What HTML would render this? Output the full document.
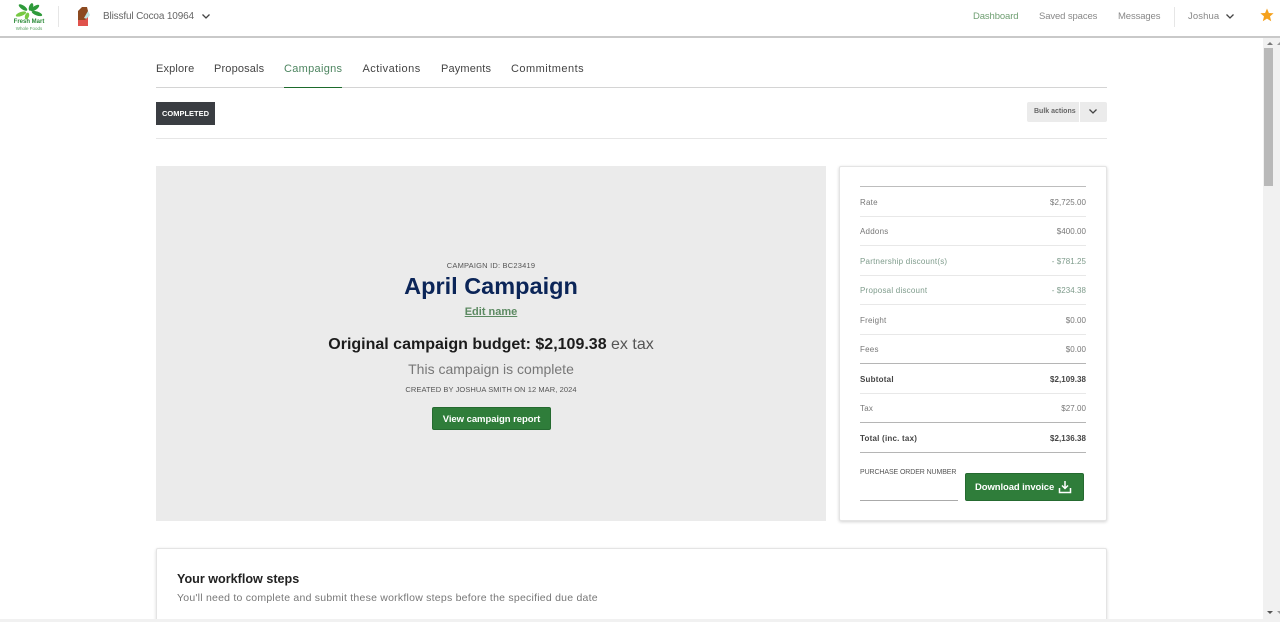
<!DOCTYPE html>
<html lang="en"><head><meta charset="utf-8"><title>April Campaign</title>
<style>
html,body{margin:0;padding:0;width:1280px;height:622px;overflow:hidden;background:#fff;font-family:"Liberation Sans",sans-serif;color:#555}
#p{position:relative;width:1280px;height:622px;overflow:hidden;background:#fff}
.a{position:absolute;white-space:nowrap}
.l{position:absolute;height:1px}
.c{left:156px;width:670px;text-align:center}
.rl{left:860px;font-size:8px;letter-spacing:.22px;color:#777;line-height:10px}
.rr{left:986px;width:100px;text-align:right;font-size:8px;letter-spacing:.05px;color:#777;line-height:10px}
.nav{top:62px;font-size:11px;line-height:14px;color:#444}
.top{top:11px;font-size:9.5px;line-height:12px;letter-spacing:-.12px;color:#888}
.btn{position:absolute;background:#2f7d3a;border:1px solid #256a30;border-radius:2px;box-sizing:border-box;color:#fff;font-weight:bold;font-size:9.5px;white-space:nowrap}
</style></head><body><div id="p">
<div class="l" style="left:0;top:36px;width:1280px;height:2px;background:#c9c9c9"></div>
<svg class="a" style="left:14px;top:3px" width="30" height="18" viewBox="0 0 30 18"><ellipse cx="9" cy="4.500" rx="5" ry="2" transform="rotate(35 9 4.500)" fill="#2e9a3a"/><ellipse cx="21" cy="5" rx="5" ry="2" transform="rotate(-35 21 5)" fill="#2e9a3a"/><ellipse cx="7" cy="11" rx="5.500" ry="2" transform="rotate(-20 7 11)" fill="#77c943"/><ellipse cx="23" cy="10.500" rx="5.500" ry="2" transform="rotate(20 23 10.500)" fill="#2e9a3a"/><ellipse cx="13" cy="13" rx="2" ry="3.500" transform="rotate(20 13 13)" fill="#77c943"/><ellipse cx="17" cy="4" rx="2" ry="4" transform="rotate(20 17 4)" fill="#2e9a3a"/></svg>
<div class="a" style="left:0;width:58px;text-align:center;top:19px;font-size:6px;line-height:7px;font-weight:bold;color:#2b8a38">Fresh Mart</div>
<div class="a" style="left:0;width:58px;text-align:center;top:26px;font-size:4.500px;line-height:5px;color:#58a060">Whole Foods</div>
<div class="l" style="left:58px;top:6px;width:1px;height:21px;background:#e6e6e6"></div>
<svg class="a" style="left:76px;top:6px" width="15" height="21" viewBox="0 0 15 21"><path d="M2 5 L6 1 L11 1 L12 5 V15 H2Z" fill="#8c4a20"/><path d="M8 12 L12 5 L14 9 L11 13Z" fill="#bfe5e3"/><path d="M2 14 H9 L12 11 V20 H2Z" fill="#e0524c"/></svg>
<div class="a" style="left:103px;top:11px;font-size:10px;line-height:12px;letter-spacing:-.15px;color:#666">Blissful Cocoa 10964</div>
<svg class="a" style="left:201px;top:13px" width="10" height="7" viewBox="0 0 10 7"><path d="M1.500 1.500 L5 5 L8.500 1.500" fill="none" stroke="#444" stroke-width="1.300"/></svg>
<div class="a top" style="left:973px;color:#6f9f72">Dashboard</div>
<div class="a top" style="left:1039px">Saved spaces</div>
<div class="a top" style="left:1118px">Messages</div>
<div class="l" style="left:1174px;top:7px;width:1px;height:20px;background:#e6e6e6"></div>
<div class="a top" style="left:1188px;letter-spacing:.1px">Joshua</div>
<svg class="a" style="left:1225px;top:13px" width="10" height="7" viewBox="0 0 10 7"><path d="M1.500 1.500 L5 5 L8.500 1.500" fill="none" stroke="#444" stroke-width="1.300"/></svg>
<svg class="a" style="left:1260px;top:8px" width="14" height="14" viewBox="0 0 14 14"><path d="M7 .5 L8.900 5 L13.600 5.300 L10 8.400 L11.200 13.200 L7 10.600 L2.800 13.200 L4 8.400 L.4 5.300 L5.100 5Z" fill="#f5a11c"/></svg>

<div class="a nav" style="left:156px;letter-spacing:.15px">Explore</div>
<div class="a nav" style="left:214px;letter-spacing:.15px">Proposals</div>
<div class="a nav" style="left:284px;letter-spacing:.3px;color:#4d8560">Campaigns</div>
<div class="a nav" style="left:362.500px;letter-spacing:.45px">Activations</div>
<div class="a nav" style="left:441px;letter-spacing:.15px">Payments</div>
<div class="a nav" style="left:511px;letter-spacing:.48px">Commitments</div>
<div class="l" style="left:156px;top:87px;width:951px;background:#d4d4d4"></div>
<div class="l" style="left:284px;top:87px;width:58px;background:#1d6b2c"></div>

<div class="a" style="left:156px;top:102px;width:59px;height:23px;background:#3a3d42;color:#fff;font-size:7.500px;font-weight:bold;line-height:23px;text-align:center">COMPLETED</div>
<div class="a" style="left:1027px;top:102px;width:80px;height:20px;background:#ebebeb;border-radius:2px"></div>
<div class="l" style="left:1079px;top:102px;width:1px;height:20px;background:#fff"></div>
<div class="a" style="left:1034px;top:107px;font-size:7px;line-height:10px;font-weight:bold;color:#666">Bulk actions</div>
<svg class="a" style="left:1088px;top:108px" width="10" height="7" viewBox="0 0 10 7"><path d="M1.500 1.500 L5 5 L8.500 1.500" fill="none" stroke="#444" stroke-width="1.300"/></svg>
<div class="l" style="left:156px;top:138px;width:951px;background:#e6e6e6"></div>

<div class="a" style="left:156px;top:166px;width:670px;height:355px;background:#ebebeb"></div>
<div class="a c" style="top:261px;font-size:7.500px;line-height:10px;letter-spacing:.2px;color:#555">CAMPAIGN ID: BC23419</div>
<div class="a c" style="top:272px;font-size:23.500px;line-height:28px;font-weight:bold;color:#0b2558">April Campaign</div>
<div class="a c" style="top:305px;font-size:11px;line-height:14px;font-weight:bold;color:#5c8a62;text-decoration:underline">Edit name</div>
<div class="a c" style="top:336px;font-size:16px;line-height:18px;font-weight:bold;color:#1c1c1c">Original campaign budget: $2,109.38 <span style="font-weight:normal;color:#555">ex tax</span></div>
<div class="a c" style="top:361px;font-size:14px;line-height:17px;color:#777">This campaign is complete</div>
<div class="a c" style="top:385px;font-size:7.500px;line-height:10px;letter-spacing:.08px;color:#555">CREATED BY JOSHUA SMITH ON 12 MAR, 2024</div>
<div class="btn" style="left:432px;top:407px;width:119px;height:23px;line-height:23px;text-align:center;letter-spacing:-.05px">View campaign report</div>

<div class="a" style="left:839px;top:166px;width:268px;height:355px;box-sizing:border-box;background:#fff;border:1px solid #e4e4e4;border-radius:2px;box-shadow:0 1px 3px rgba(0,0,0,.18)"></div>
<div class="l" style="left:860px;top:186px;width:226px;background:#bdbdbd"></div>
<div class="a rl" style="top:198px">Rate</div><div class="a rr" style="top:198px">$2,725.00</div>
<div class="l" style="left:860px;top:216px;width:226px;background:#e8e8e8"></div>
<div class="a rl" style="top:227px">Addons</div><div class="a rr" style="top:227px">$400.00</div>
<div class="l" style="left:860px;top:245px;width:226px;background:#e8e8e8"></div>
<div class="a rl" style="top:257px;color:#7f9c8c">Partnership discount(s)</div><div class="a rr" style="top:257px;color:#7f9c8c">- $781.25</div>
<div class="l" style="left:860px;top:275px;width:226px;background:#e8e8e8"></div>
<div class="a rl" style="top:286px;color:#7f9c8c">Proposal discount</div><div class="a rr" style="top:286px;color:#7f9c8c">- $234.38</div>
<div class="l" style="left:860px;top:304px;width:226px;background:#e8e8e8"></div>
<div class="a rl" style="top:316px">Freight</div><div class="a rr" style="top:316px">$0.00</div>
<div class="l" style="left:860px;top:334px;width:226px;background:#e8e8e8"></div>
<div class="a rl" style="top:345px">Fees</div><div class="a rr" style="top:345px">$0.00</div>
<div class="l" style="left:860px;top:363px;width:226px;background:#b5b5b5"></div>
<div class="a rl" style="top:375px;font-weight:bold;color:#444">Subtotal</div><div class="a rr" style="top:375px;font-weight:bold;color:#444">$2,109.38</div>
<div class="l" style="left:860px;top:393px;width:226px;background:#e8e8e8"></div>
<div class="a rl" style="top:404px">Tax</div><div class="a rr" style="top:404px">$27.00</div>
<div class="l" style="left:860px;top:422px;width:226px;background:#b5b5b5"></div>
<div class="a rl" style="top:434px;font-weight:bold;color:#444">Total (inc. tax)</div><div class="a rr" style="top:434px;font-weight:bold;color:#444">$2,136.38</div>
<div class="l" style="left:860px;top:452px;width:226px;background:#b5b5b5"></div>
<div class="a" style="left:860px;top:468px;font-size:7px;line-height:9px;letter-spacing:-.1px;color:#555">PURCHASE ORDER NUMBER</div>
<div class="l" style="left:860px;top:500px;width:98px;background:#aaa"></div>
<div class="btn" style="left:965px;top:473px;width:119px;height:28px;line-height:27px;padding-left:9px;letter-spacing:-.1px">Download invoice</div>
<svg class="a" style="left:1058px;top:480px" width="14" height="14" viewBox="0 0 14 14"><path d="M7 1V8M4 5.500L7 8.500L10 5.500M1.500 8V12.500H12.500V8" fill="none" stroke="#fff" stroke-width="1.500"/></svg>

<div class="a" style="left:156px;top:548px;width:951px;height:90px;box-sizing:border-box;background:#fff;border:1px solid #e4e4e4;border-radius:2px;box-shadow:0 1px 3px rgba(0,0,0,.15)"></div>
<div class="a" style="left:177px;top:572px;font-size:12.600px;line-height:15px;font-weight:bold;color:#222">Your workflow steps</div>
<div class="a" style="left:177px;top:592px;font-size:10.500px;line-height:13px;letter-spacing:.235px;color:#777">You'll need to complete and submit these workflow steps before the specified due date</div>

<div class="a" style="left:1263px;top:38px;width:17px;height:584px;background:#f1f1f1"></div>
<div class="a" style="left:1264px;top:48px;width:9px;height:138px;background:#b9b9b9"></div>
<div class="a" style="left:1266.500px;top:42px;width:0;height:0;border:3px solid transparent;border-top:0;border-bottom:3px solid #777"></div>
<div class="a" style="left:1276.500px;top:42px;width:0;height:0;border:3px solid transparent;border-top:0;border-bottom:3px solid #999"></div>
<div class="a" style="left:1266.500px;top:611px;width:0;height:0;border:3px solid transparent;border-bottom:0;border-top:3px solid #555"></div>
<div class="a" style="left:1276.500px;top:611px;width:0;height:0;border:3px solid transparent;border-bottom:0;border-top:3px solid #999"></div>
<div class="a" style="left:0;top:619px;width:1280px;height:3px;background:#f1f1f1"></div>
</div></body></html>
